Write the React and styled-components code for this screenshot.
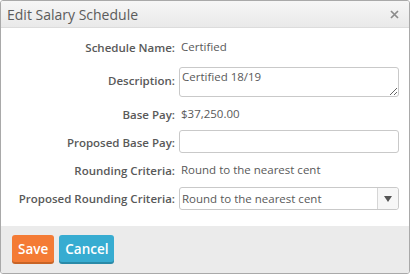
import React from "react";
import styled, { createGlobalStyle } from "styled-components";

const Global = createGlobalStyle`
  html, body { margin: 0; padding: 0; background: #fff; }
  body { font-family: "Open Sans", "Liberation Sans", sans-serif; }
  * { box-sizing: border-box; }
`;

const Dialog = styled.div`
  width: 410px;
  height: 274px;
  border: 1px solid #a9a9a9;
  border-radius: 3px;
  display: flex;
  flex-direction: column;
  overflow: hidden;
  background: #fff;
`;

const TitleBar = styled.div`
  height: 27px;
  flex: none;
  display: flex;
  align-items: center;
  justify-content: space-between;
  padding: 0 10px 0 6px;
  background: linear-gradient(#f6f6f6, #e9e9e9);
  border-bottom: 1px solid #dcdcdc;
`;

const Title = styled.div`
  font-size: 14px;
  color: #5b5b5b;
`;

const Close = styled.div`
  width: 10px;
  height: 10px;
  display: flex;
  align-items: center;
  justify-content: center;
`;

const Body = styled.div`
  flex: 1;
  display: grid;
  grid-template-columns: 174px 220px;
  column-gap: 4px;
  row-gap: 7px;
  align-content: start;
  align-items: center;
  padding: 9px 0 0 0;
`;

const Label = styled.div`
  text-align: right;
  font-size: 11.5px;
  font-weight: 600;
  color: #595959;
  white-space: nowrap;
`;

const Value = styled.div`
  font-size: 11.5px;
  color: #595959;
  padding-left: 2px;
  line-height: 20px;
`;

const TextArea = styled.textarea`
  width: 220px;
  height: 30px;
  border: 1px solid #c9c9c9;
  border-radius: 3px;
  font-family: inherit;
  font-size: 11.5px;
  color: #595959;
  padding: 1px 2px;
  margin: 3px 0 0 0;
  display: block;
`;

const Input = styled.input`
  width: 220px;
  height: 23px;
  border: 1px solid #c9c9c9;
  border-radius: 3px;
  font-family: inherit;
  font-size: 11.5px;
  padding: 0 3px;
  margin: -1px 0 0 0;
  display: block;
`;

const Select = styled.div`
  width: 220px;
  height: 23px;
  border: 1px solid #c9c9c9;
  border-radius: 3px;
  display: flex;
  align-items: stretch;
  font-size: 11.5px;
  color: #595959;
`;

const SelectText = styled.div`
  flex: 1;
  display: flex;
  align-items: center;
  padding-left: 2px;
`;

const SelectArrow = styled.div`
  width: 21px;
  border-left: 1px solid #d6d6d6;
  background: #f7f7f7;
  display: flex;
  align-items: center;
  justify-content: center;
  border-radius: 0 3px 3px 0;
`;

const Footer = styled.div`
  height: 47px;
  flex: none;
  background: #ebebeb;
  display: flex;
  align-items: center;
  gap: 5px;
  padding: 0 11px;
`;

const Button = styled.button`
  height: 27px;
  border: none;
  border-radius: 3px;
  color: #fff;
  font-family: inherit;
  font-size: 13.5px;
  font-weight: 600;
  padding: 0 6px;
  background: ${(p) => p.$bg};
  box-shadow: 0 2px 0 ${(p) => p.$shadow};
  margin-bottom: 2px;
`;

export default function App() {
  return (
    <>
      <Global />
      <Dialog>
        <TitleBar>
          <Title>Edit Salary Schedule</Title>
          <Close>
            <svg width="9" height="9" viewBox="0 0 9 9">
              <path d="M1 1L8 8M8 1L1 8" stroke="#8c8c8c" strokeWidth="1.7" />
            </svg>
          </Close>
        </TitleBar>
        <Body>
          <Label>Schedule Name:</Label>
          <Value>Certified</Value>
          <Label>Description:</Label>
          <TextArea defaultValue="Certified 18/19" />
          <Label>Base Pay:</Label>
          <Value>$37,250.00</Value>
          <Label>Proposed Base Pay:</Label>
          <Input />
          <Label>Rounding Criteria:</Label>
          <Value>Round to the nearest cent</Value>
          <Label>Proposed Rounding Criteria:</Label>
          <Select>
            <SelectText>Round to the nearest cent</SelectText>
            <SelectArrow>
              <svg width="8" height="6" viewBox="0 0 8 6">
                <path d="M0 0H8L4 6Z" fill="#555" />
              </svg>
            </SelectArrow>
          </Select>
        </Body>
        <Footer>
          <Button $bg="#f47b35" $shadow="#c86426">Save</Button>
          <Button $bg="#37acd1" $shadow="#2a8aa8">Cancel</Button>
        </Footer>
      </Dialog>
    </>
  );
}
